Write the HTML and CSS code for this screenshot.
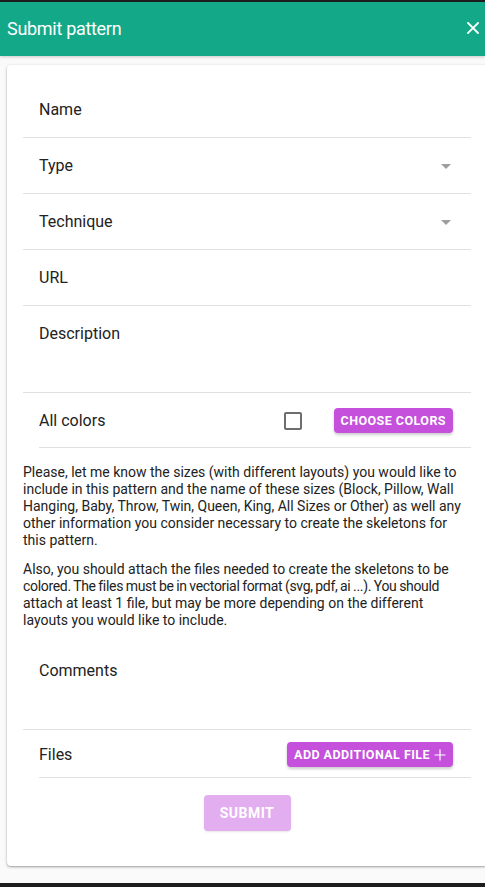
FILE: index.html
```html
<!DOCTYPE html>
<html>
<head>
<meta charset="utf-8">
<link rel="stylesheet" href="styles.css">
</head>
<body>
<div class="topstrip"></div>
<header class="appbar">
  <span class="title">Submit pattern</span>
  <svg class="close" width="12" height="12" viewBox="0 0 12 12"><path d="M1 1L11 11M11 1L1 11" stroke="#fff" stroke-width="1.8" stroke-linecap="square"/></svg>
</header>
<main class="main">
  <div class="card">
    <div class="field"><span class="label">Name</span></div>
    <div class="field"><span class="label">Type</span><span class="arrow"></span></div>
    <div class="field"><span class="label">Technique</span><span class="arrow"></span></div>
    <div class="field"><span class="label">URL</span></div>
    <div class="field tall"><span class="label">Description</span></div>
    <div class="row colors">
      <span class="label grow">All colors</span>
      <span class="checkbox"></span>
      <button class="btn">Choose colors</button>
    </div>
    <p class="info">Please, let me know the sizes (with different layouts) you would like to include in this pattern and the name of these sizes (Block, Pillow, Wall Hanging, Baby, Throw, Twin, Queen, King, All Sizes or Other) as well any other information you consider necessary to create the skeletons for this pattern.</p>
    <p class="info second">Also, you should attach the files needed to create the skeletons to be <span class="tight">colored. The files must be in vectorial format (svg, pdf, ai ...). You should</span> attach at least 1 file, but may be more depending on the different layouts you would like to include.</p>
    <div class="field tall"><span class="label">Comments</span></div>
    <div class="row files">
      <span class="label grow">Files</span>
      <button class="btn">Add additional file<svg class="plus" width="12" height="12" viewBox="0 0 12 12"><path d="M6 0.5V11.5M0.5 6H11.5" stroke="#fff" stroke-width="1.2"/></svg></button>
    </div>
    <div class="submitwrap"><button class="submit">Submit</button></div>
  </div>
</main>
<div class="bottomstrip"></div>
</body>
</html>
```

FILE: styles.css
```css
html, body {
  margin: 0;
  padding: 0;
}
body {
  width: 485px;
  height: 887px;
  overflow: hidden;
  background: #fafafa;
  font-family: Roboto, "Liberation Sans", sans-serif;
  color: rgba(0,0,0,0.87);
  display: flex;
  flex-direction: column;
}
.topstrip {
  height: 2px;
  background: #1d1d1d;
}
.appbar {
  height: 54px;
  background: #13a988;
  display: flex;
  align-items: center;
  padding: 0 6px 2px 7px;
  box-sizing: border-box;
  box-shadow: 0 1px 3px rgba(0,0,0,0.2);
  position: relative;
  z-index: 1;
}
.title {
  flex: 1;
  color: #fff;
  font-size: 18px;
  font-weight: 400;
  letter-spacing: -0.3px;
}
.main {
  padding: 9px 0 0 7px;
  flex: 1;
}
.card {
  width: 480px;
  box-sizing: border-box;
  background: #fff;
  border-radius: 4px;
  box-shadow: 0 1px 3px rgba(0,0,0,0.3), 0 1px 1px rgba(0,0,0,0.1);
  padding: 17px 16px 35px;
}
.field {
  height: 56px;
  box-sizing: border-box;
  border-bottom: 1px solid #e0e0e0;
  display: flex;
  align-items: center;
  padding: 1px 20px 0 16px;
}
.field.tall {
  height: 87px;
  align-items: flex-start;
  padding-top: 18px;
}
.label {
  font-size: 16px;
  line-height: 20px;
  flex: 1;
  color: #222;
}
.arrow {
  width: 0;
  height: 0;
  border-left: 5px solid transparent;
  border-right: 5px solid transparent;
  border-top: 5px solid #9e9e9e;
  margin-top: 1px;
}
.row {
  margin-left: 16px;
  border-bottom: 1px solid #e0e0e0;
  display: flex;
  align-items: center;
  box-sizing: border-box;
  padding: 1px 18px 0 0;
}
.row.colors {
  height: 55px;
}
.row.files {
  height: 48px;
  padding-top: 2px;
}
.checkbox {
  width: 14px;
  height: 14px;
  border: 2px solid #6e6e6e;
  border-radius: 2px;
  margin-right: 32px;
}
.btn {
  border: none;
  background: #c450dc;
  color: #fff;
  font-family: Roboto, "Liberation Sans", sans-serif;
  font-weight: 700;
  font-size: 12.5px;
  letter-spacing: 0.45px;
  text-transform: uppercase;
  height: 25px;
  padding: 0 7px;
  border-radius: 4px;
  box-shadow: 0 2px 3px rgba(0,0,0,0.2);
  display: flex;
  align-items: center;
}
.plus {
  margin-left: 4px;
}
.info {
  font-size: 14px;
  line-height: 17px;
  margin: 16px 0 0;
  color: #222;
}
.info.second {
  margin: 12px 0 14px;
}
.tight {
  letter-spacing: -0.32px;
  word-spacing: -0.5px;
}
.submitwrap {
  display: flex;
  justify-content: center;
  margin-top: 17px;
}
.submit {
  border: none;
  background: #e3aef0;
  color: #fff;
  font-family: Roboto, "Liberation Sans", sans-serif;
  font-weight: 700;
  font-size: 14px;
  letter-spacing: 0.5px;
  text-transform: uppercase;
  width: 87px;
  height: 36px;
  border-radius: 4px;
  box-shadow: 0 1px 2px rgba(0,0,0,0.1);
}
.bottomstrip {
  height: 4px;
  background: #1d1d1d;
  margin-top: 13px;
}
```
